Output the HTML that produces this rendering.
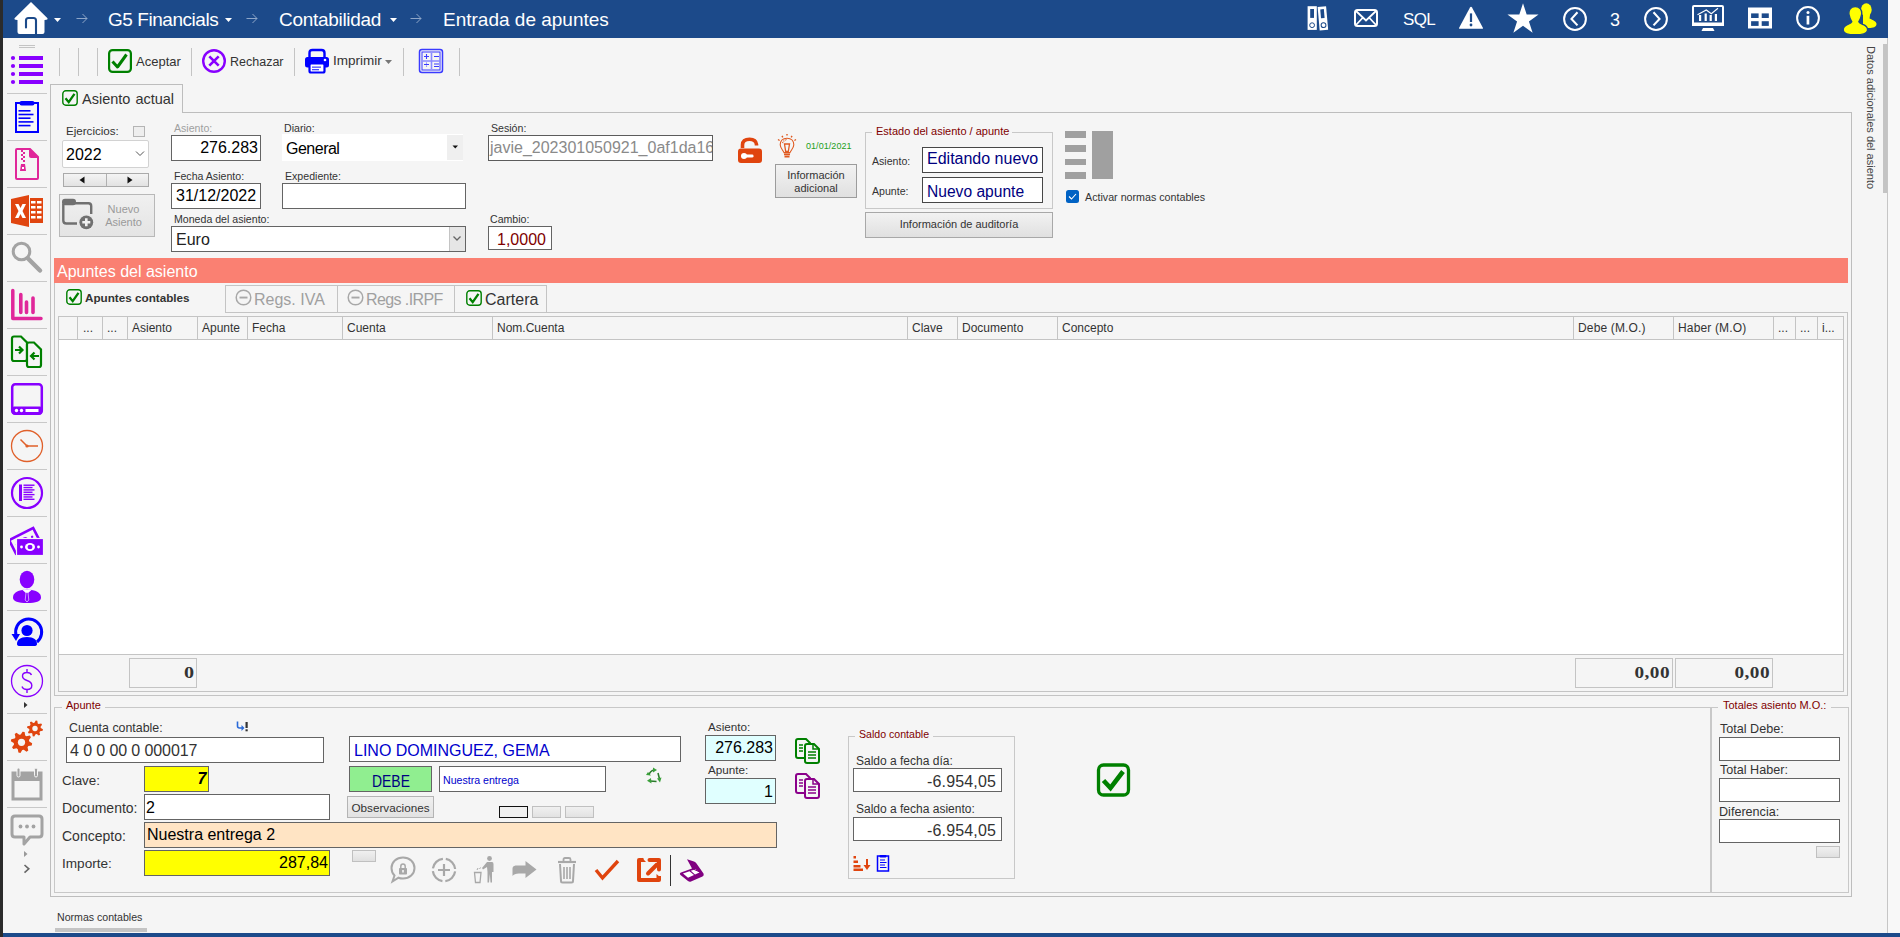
<!DOCTYPE html>
<html><head><meta charset="utf-8"><style>
html,body{margin:0;padding:0;}
body{width:1900px;height:937px;overflow:hidden;position:relative;background:#f5f5f5;font-family:"Liberation Sans",sans-serif;}
.a{position:absolute;display:block;}
.t{position:absolute;line-height:1;white-space:nowrap;}
</style></head><body>
<div class="a" style="left:0px;top:0px;width:3px;height:937px;background:#2b2b2b;"></div>
<div class="a" style="left:3px;top:0px;width:1885px;height:38px;background:#1c4a8a;"></div>
<div class="a" style="left:1888px;top:0px;width:12px;height:937px;background:#f8f8f8;"></div>
<div class="a" style="left:1887px;top:38px;width:1px;height:895px;background:#c6c6c6;"></div>
<div class="a" style="left:3px;top:933px;width:1897px;height:4px;background:#1c4a8a;"></div>
<div class="a" style="left:1883px;top:44px;width:4px;height:149px;background:#c4c4c4;"></div>
<div class="t" style="left:1876px;top:46px;font-size:11px;color:#444;transform-origin:0 0;transform:rotate(90deg);font-family:'Liberation Sans',sans-serif;line-height:1;">Datos adicionales del asiento</div>
<svg class="a" style="left:13px;top:0px;" width="36" height="36" viewBox="0 0 36 36"><path d="M18 2 L34.5 18.2 Q35 19.5 33.5 19.7 L31.5 20 L31.5 32 Q31.5 34 29.5 34 L6.5 34 Q4.5 34 4.5 32 L4.5 20 L2.5 19.7 Q1 19.5 1.5 18.2 Z" fill="#fff"/><path d="M13 27.5 L13 20.5 Q13 18 15.5 18 L20.5 18 Q23 18 23 20.5 L23 34" stroke="#1c4a8a" stroke-width="2.1" fill="none" stroke-linecap="round"/></svg>
<svg class="a" style="left:54px;top:18px;" width="7" height="4" viewBox="0 0 7 4"><path d="M0 0 L7 0 L3.5 4 Z" fill="#fff"/></svg>
<svg class="a" style="left:76px;top:13px;" width="12" height="11" viewBox="0 0 12 11"><path d="M0.5 5.5 L11 5.5 M6.5 1 L11 5.5 L6.5 10" stroke="#8ea6c8" stroke-width="1" fill="none"/></svg>
<div class="t" style="left:108px;top:9.92px;font-size:19px;color:#fff;font-weight:400;font-family:'Liberation Sans',sans-serif;letter-spacing:-0.45px">G5 Financials</div>
<svg class="a" style="left:225px;top:18px;" width="7" height="4" viewBox="0 0 7 4"><path d="M0 0 L7 0 L3.5 4 Z" fill="#fff"/></svg>
<svg class="a" style="left:246px;top:13px;" width="12" height="11" viewBox="0 0 12 11"><path d="M0.5 5.5 L11 5.5 M6.5 1 L11 5.5 L6.5 10" stroke="#8ea6c8" stroke-width="1" fill="none"/></svg>
<div class="t" style="left:279px;top:9.92px;font-size:19px;color:#fff;font-weight:400;font-family:'Liberation Sans',sans-serif;letter-spacing:-0.3px">Contabilidad</div>
<svg class="a" style="left:390px;top:18px;" width="7" height="4" viewBox="0 0 7 4"><path d="M0 0 L7 0 L3.5 4 Z" fill="#fff"/></svg>
<svg class="a" style="left:410px;top:13px;" width="12" height="11" viewBox="0 0 12 11"><path d="M0.5 5.5 L11 5.5 M6.5 1 L11 5.5 L6.5 10" stroke="#8ea6c8" stroke-width="1" fill="none"/></svg>
<div class="t" style="left:443px;top:9.92px;font-size:19px;color:#fff;font-weight:400;font-family:'Liberation Sans',sans-serif;">Entrada de apuntes</div>
<svg class="a" style="left:1306px;top:5px;" width="24" height="26" viewBox="0 0 24 26"><g fill="#fff"><rect x="1.6" y="1.2" width="9.2" height="23.7"/></g><rect x="4.2" y="4" width="3.8" height="8.9" fill="#1c4a8a"/><circle cx="6.1" cy="20.2" r="2.4" fill="none" stroke="#1c4a8a" stroke-width="1"/><g transform="rotate(-5 16 13)"><rect x="12.6" y="1.6" width="8.5" height="23.7" fill="#fff"/><rect x="15" y="4.3" width="3.6" height="8.9" fill="#1c4a8a"/><circle cx="16.9" cy="20.3" r="2.4" fill="none" stroke="#1c4a8a" stroke-width="1"/></g></svg>
<svg class="a" style="left:1353px;top:8px;" width="26" height="20" viewBox="0 0 26 20"><rect x="2" y="2" width="22" height="16" rx="2.5" fill="none" stroke="#fff" stroke-width="2"/><path d="M3 3 L13 12.5 L23 3 M3 17 L9.5 10 M23 17 L16.5 10" stroke="#fff" stroke-width="1.8" fill="none"/></svg>
<div class="t" style="left:1403px;top:11.11px;font-size:17px;color:#fff;font-weight:400;font-family:'Liberation Sans',sans-serif;letter-spacing:-0.6px">SQL</div>
<svg class="a" style="left:1457px;top:5px;" width="28" height="26" viewBox="0 0 28 26"><path d="M14 1.7 Q14.6 1.7 15 2.4 L26 23 Q26.3 23.8 25.4 23.8 L2.6 23.8 Q1.7 23.8 2 23 L13 2.4 Q13.4 1.7 14 1.7Z" fill="#fff"/><rect x="12.9" y="8.4" width="2.2" height="8.6" fill="#1c4a8a"/><circle cx="14" cy="20" r="1.4" fill="#1c4a8a"/></svg>
<svg class="a" style="left:1505px;top:2px;" width="36" height="34" viewBox="0 0 36 34"><polygon points="18.00,1.20 21.67,12.50 33.56,12.50 23.94,19.49 27.62,30.80 18.00,23.81 8.38,30.80 12.06,19.49 2.44,12.50 14.33,12.50" fill="#fff"/></svg>
<svg class="a" style="left:1561px;top:5px;" width="28" height="28" viewBox="0 0 28 28"><circle cx="14" cy="14" r="10.9" fill="none" stroke="#fff" stroke-width="2"/><path d="M16.5 7.3 L10.5 13.9 L16.5 20.4" stroke="#fff" stroke-width="2.1" fill="none"/></svg>
<div class="t" style="left:1610px;top:10.76px;font-size:18px;color:#fff;font-weight:400;font-family:'Liberation Sans',sans-serif;">3</div>
<svg class="a" style="left:1642px;top:5px;" width="28" height="28" viewBox="0 0 28 28"><circle cx="14" cy="14" r="10.9" fill="none" stroke="#fff" stroke-width="2"/><path d="M11.5 7.3 L17.5 13.9 L11.5 20.4" stroke="#fff" stroke-width="2.1" fill="none"/></svg>
<svg class="a" style="left:1690px;top:3px;" width="36" height="30" viewBox="0 0 36 30"><rect x="3" y="3" width="30" height="19" rx="1" fill="none" stroke="#fff" stroke-width="2"/><rect x="2" y="19.5" width="32" height="3.5" fill="#fff"/><path d="M13 25 L23 25 L24.5 28 L11.5 28Z" fill="#fff"/><g fill="#fff"><rect x="9" y="12" width="2.2" height="6"/><rect x="14.6" y="10.5" width="2.2" height="7.5"/><rect x="19.6" y="12" width="2.2" height="6"/><rect x="24.8" y="11" width="2.2" height="7"/></g><path d="M7.5 11.7 L16.3 7 L21.3 10.8 L28 5.3" stroke="#fff" stroke-width="1.1" fill="none"/></svg>
<svg class="a" style="left:1748px;top:7px;" width="24" height="22" viewBox="0 0 24 22"><rect x="0" y="0.5" width="24" height="21" fill="#fff"/><g fill="#1c4a8a"><rect x="3.1" y="6.4" width="7.5" height="4.6"/><rect x="13.7" y="6.4" width="7.1" height="4.6"/><rect x="3.1" y="14.2" width="7.5" height="4.7"/><rect x="13.7" y="14.2" width="7.1" height="4.7"/></g></svg>
<svg class="a" style="left:1794px;top:5px;" width="28" height="28" viewBox="0 0 28 28"><circle cx="14" cy="13" r="10.9" fill="none" stroke="#fff" stroke-width="2"/><circle cx="14" cy="7.6" r="1.5" fill="#fff"/><rect x="12.6" y="10.8" width="2.7" height="8.7" fill="#fff"/></svg>
<svg class="a" style="left:1843px;top:1px;" width="36" height="36" viewBox="0 0 36 36"><g fill="#ffff00"><ellipse cx="23.3" cy="8.8" rx="5.4" ry="6.5"/><path d="M20 14 L27 14 L26.5 17.5 C30 19 33.5 20.5 33.5 23 C33.5 26 30 27 26 27 L20 27Z"/></g><g fill="#ffff00" stroke="#1c4a8a" stroke-width="1.4"><path d="M12.2 5.5 C16.8 5.5 19.3 9 18.6 13.5 C18.2 16.5 16.8 19 15.8 20.8 C16.3 22 18 22.6 20.5 23.7 C24 25.3 24.8 27.5 24.5 29.5 C24 32.8 19 33.8 12.2 33.8 C5.4 33.8 0.6 32.8 0.3 29.5 C0 27.5 0.8 25.3 4.2 23.7 C6.7 22.6 8.3 22 8.8 20.8 C7.8 19 6.4 16.5 6 13.5 C5.3 9 7.8 5.5 12.2 5.5Z"/></g></svg>
<div class="a" style="left:19px;top:45px;width:16px;height:1px;background:#c4c4c4;"></div>
<div class="a" style="left:19px;top:47px;width:16px;height:1px;background:#c4c4c4;"></div>
<div class="a" style="left:7px;top:93px;width:40px;height:1px;background:#c8c8c8;"></div>
<div class="a" style="left:7px;top:140px;width:40px;height:1px;background:#c8c8c8;"></div>
<div class="a" style="left:7px;top:187px;width:40px;height:1px;background:#c8c8c8;"></div>
<div class="a" style="left:7px;top:234px;width:40px;height:1px;background:#c8c8c8;"></div>
<div class="a" style="left:7px;top:281px;width:40px;height:1px;background:#c8c8c8;"></div>
<div class="a" style="left:7px;top:328px;width:40px;height:1px;background:#c8c8c8;"></div>
<div class="a" style="left:7px;top:375px;width:40px;height:1px;background:#c8c8c8;"></div>
<div class="a" style="left:7px;top:422px;width:40px;height:1px;background:#c8c8c8;"></div>
<div class="a" style="left:7px;top:469px;width:40px;height:1px;background:#c8c8c8;"></div>
<div class="a" style="left:7px;top:516px;width:40px;height:1px;background:#c8c8c8;"></div>
<div class="a" style="left:7px;top:563px;width:40px;height:1px;background:#c8c8c8;"></div>
<div class="a" style="left:7px;top:610px;width:40px;height:1px;background:#c8c8c8;"></div>
<div class="a" style="left:7px;top:656px;width:40px;height:1px;background:#c8c8c8;"></div>
<div class="a" style="left:7px;top:713px;width:40px;height:1px;background:#c8c8c8;"></div>
<div class="a" style="left:7px;top:760px;width:40px;height:1px;background:#c8c8c8;"></div>
<div class="a" style="left:7px;top:807px;width:40px;height:1px;background:#c8c8c8;"></div>
<svg class="a" style="left:9px;top:54px;" width="36" height="32" viewBox="0 0 36 32"><circle cx="4" cy="4" r="2.1" fill="#8800ff"/><rect x="10" y="2" width="24" height="4" fill="#8800ff"/><circle cx="4" cy="12" r="2.1" fill="#8800ff"/><rect x="10" y="10" width="24" height="4" fill="#8800ff"/><circle cx="4" cy="20" r="2.1" fill="#8800ff"/><rect x="10" y="18" width="24" height="4" fill="#8800ff"/><circle cx="4" cy="28" r="2.1" fill="#8800ff"/><rect x="10" y="26" width="24" height="4" fill="#8800ff"/></svg>
<svg class="a" style="left:14px;top:100px;" width="26" height="34" viewBox="0 0 26 34"><rect x="2" y="3" width="22" height="29" fill="none" stroke="#0000ff" stroke-width="2"/><rect x="5.5" y="1" width="15" height="4.5" rx="2" fill="#0000ff"/><rect x="4.5" y="10.0" width="12" height="1.6" fill="#0000ff"/><rect x="4.5" y="13.7" width="15" height="1.6" fill="#0000ff"/><rect x="4.5" y="17.4" width="12" height="1.6" fill="#0000ff"/><rect x="4.5" y="21.1" width="15" height="1.6" fill="#0000ff"/><rect x="4.5" y="24.8" width="12" height="1.6" fill="#0000ff"/></svg>
<svg class="a" style="left:13px;top:147px;" width="28" height="34" viewBox="0 0 28 34"><path d="M4 2 L17 2 L25 10 L25 31 Q25 32 24 32 L4 32 Q3 32 3 31 L3 3 Q3 2 4 2Z" fill="none" stroke="#e0279a" stroke-width="2"/><path d="M16 1 L26 11 L18 11 Q16 11 16 9Z" fill="#e0279a"/><g fill="#e0279a"><rect x="8" y="3" width="2" height="2"/><rect x="10" y="5" width="2" height="2"/><rect x="8" y="7" width="2" height="2"/><rect x="10" y="9" width="2" height="2"/><rect x="8" y="11" width="2" height="2"/><rect x="10" y="13" width="2" height="2"/><path d="M8 17 L12 17 L13 24 L7 24Z"/></g><rect x="9" y="20" width="2" height="2" fill="#fff"/></svg>
<svg class="a" style="left:10px;top:194px;" width="34" height="34" viewBox="0 0 34 34"><path d="M1 5 L19 1 L19 33 L1 29Z" fill="#e0450f"/><rect x="20" y="4" width="13" height="25" fill="#e0450f"/><g fill="#fff"><rect x="21" y="7" width="4.5" height="2.5"/><rect x="27" y="7" width="4.5" height="2.5"/><rect x="21" y="12" width="4.5" height="2.5"/><rect x="27" y="12" width="4.5" height="2.5"/><rect x="21" y="17" width="4.5" height="2.5"/><rect x="27" y="17" width="4.5" height="2.5"/><rect x="21" y="22" width="4.5" height="2.5"/><rect x="27" y="22" width="4.5" height="2.5"/></g><path d="M5 10 L8.5 10 L10.5 14 L12.5 10 L16 10 L12.5 17 L16 24 L12.5 24 L10.5 20 L8.5 24 L5 24 L8.5 17Z" fill="#fff"/></svg>
<svg class="a" style="left:10px;top:241px;" width="34" height="34" viewBox="0 0 34 34"><circle cx="11.5" cy="10.5" r="8.3" fill="none" stroke="#a3a3a3" stroke-width="3"/><path d="M18 17.5 L30 29.5" stroke="#a3a3a3" stroke-width="4.5" stroke-linecap="round"/></svg>
<svg class="a" style="left:10px;top:288px;" width="34" height="34" viewBox="0 0 34 34"><path d="M2.8 2.5 L2.8 30.5 L31 30.5" stroke="#e0279a" stroke-width="3.5" fill="none" stroke-linecap="round" stroke-linejoin="round"/><path d="M10.8 6.5 L10.8 24.5 M16.5 14 L16.5 24.5 M23 10 L23 24.5" stroke="#e0279a" stroke-width="3.6" stroke-linecap="round"/></svg>
<svg class="a" style="left:10px;top:335px;" width="34" height="34" viewBox="0 0 34 34"><path d="M4 1.5 L11 1.5 L17 7.5 L17 24 Q17 26 15 26 L4 26 Q2 26 2 24 L2 3.5 Q2 1.5 4 1.5Z" fill="none" stroke="#008000" stroke-width="2.2"/><path d="M19 7.5 L24 7.5 L31 14.5 L31 30 Q31 32 29 32 L19 32 Q17 32 17 30 L17 9.5 Q17 7.5 19 7.5Z" fill="#f5f5f5" stroke="#008000" stroke-width="2.2"/><path d="M5 15 L12 15 M9 11.5 L12.5 15 L9 18.5" stroke="#008000" stroke-width="2.2" fill="none"/><path d="M29 21 L21 21 M24.5 17.5 L21 21 L24.5 24.5" stroke="#008000" stroke-width="2.2" fill="none"/></svg>
<svg class="a" style="left:10px;top:382px;" width="34" height="34" viewBox="0 0 34 34"><rect x="2.2" y="2.2" width="29.6" height="29.6" rx="3" fill="none" stroke="#8800ff" stroke-width="2.5"/><rect x="2" y="24.5" width="30" height="8" rx="2" fill="#8800ff"/><circle cx="6.5" cy="28.5" r="1.7" fill="#fff"/><circle cx="11.5" cy="28.5" r="1.7" fill="#fff"/><rect x="15.5" y="27" width="13" height="3" fill="#fff"/></svg>
<svg class="a" style="left:10px;top:429px;" width="34" height="34" viewBox="0 0 34 34"><circle cx="17" cy="17" r="15.5" fill="none" stroke="#e0602a" stroke-width="1.3"/><path d="M10.5 10.5 L17 17 L28 17" stroke="#e0602a" stroke-width="1.5" fill="none"/><circle cx="17" cy="17" r="1.6" fill="#e0602a"/></svg>
<svg class="a" style="left:10px;top:476px;" width="34" height="34" viewBox="0 0 34 34"><circle cx="17" cy="17" r="15" fill="none" stroke="#8800ff" stroke-width="2.2"/><rect x="9" y="8.5" width="3" height="16.5" fill="#8800ff"/><rect x="13.5" y="8.50" width="11" height="1.4" fill="#8800ff"/><rect x="13.5" y="10.85" width="9" height="1.4" fill="#8800ff"/><rect x="13.5" y="13.20" width="11" height="1.4" fill="#8800ff"/><rect x="13.5" y="15.55" width="9" height="1.4" fill="#8800ff"/><rect x="13.5" y="17.90" width="11" height="1.4" fill="#8800ff"/><rect x="13.5" y="20.25" width="9" height="1.4" fill="#8800ff"/><rect x="13.5" y="22.60" width="11" height="1.4" fill="#8800ff"/></svg>
<svg class="a" style="left:10px;top:523px;" width="34" height="34" viewBox="0 0 34 34"><g transform="rotate(-27 17 17)"><rect x="1" y="9" width="27" height="15" fill="none" stroke="#8800ff" stroke-width="2.6"/><ellipse cx="14.5" cy="16.5" rx="4" ry="3.3" fill="#8800ff"/><circle cx="6" cy="16.5" r="1.2" fill="#8800ff"/><circle cx="23" cy="16.5" r="1.2" fill="#8800ff"/></g><rect x="6.5" y="15.5" width="27" height="17" fill="#8800ff" stroke="#f5f5f5" stroke-width="1.2"/><ellipse cx="20" cy="24" rx="5" ry="4" fill="#fff"/><circle cx="11.5" cy="24" r="1.4" fill="#fff"/><circle cx="28.5" cy="24" r="1.4" fill="#fff"/><ellipse cx="20" cy="24" rx="2.5" ry="2.3" fill="#8800ff"/></svg>
<svg class="a" style="left:10px;top:569px;" width="34" height="36" viewBox="0 0 34 36"><ellipse cx="17" cy="10.5" rx="7.3" ry="8.8" fill="#8800ff"/><path d="M17 20 L10 21.5 C5 23 3 25.5 3 28.5 C3 32.5 8 34 17 34 C26 34 31 32.5 31 28.5 C31 25.5 29 23 24 21.5Z" fill="#8800ff"/><path d="M12.5 21 L17 25 L21.5 21 L20 20.3 L14 20.3Z" fill="#fff"/><path d="M16 23.5 L18 23.5 L18.8 31 L17 33 L15.2 31Z" fill="#8800ff" stroke="#fff" stroke-width="0.6"/></svg>
<svg class="a" style="left:10px;top:615px;" width="34" height="36" viewBox="0 0 34 36"><path d="M6 20 A13 13 0 1 1 27 27" stroke="#0000ff" stroke-width="3" fill="none"/><path d="M1.5 19 L10 19 L6 26Z" fill="#0000ff"/><circle cx="17" cy="15.5" r="5.6" fill="#0000ff"/><path d="M17 22 C10 22 7 25 7 29 Q7 31 10 31 L24 31 Q27 31 27 29 C27 25 24 22 17 22Z" fill="#0000ff"/></svg>
<svg class="a" style="left:10px;top:664px;" width="34" height="34" viewBox="0 0 34 34"><circle cx="17" cy="17" r="15.5" fill="none" stroke="#8800ff" stroke-width="1.3"/><path d="M21.5 11 Q20.5 8.5 17 8.5 Q12.5 8.5 12.5 12 Q12.5 15 17 16.5 Q21.8 18 21.8 21.5 Q21.8 25.5 17 25.5 Q13 25.5 12 22.5 M17 5 L17 8.5 M17 25.5 L17 29" stroke="#8800ff" stroke-width="1.4" fill="none"/></svg>
<svg class="a" style="left:24px;top:702px;" width="4" height="6" viewBox="0 0 4 6"><path d="M0 0 L3.5 3 L0 6Z" fill="#333"/></svg>
<svg class="a" style="left:9px;top:719px;" width="36" height="36" viewBox="0 0 36 36"><polygon points="23.15,24.35 22.74,26.41 19.38,26.98 18.53,28.25 19.29,31.57 17.54,32.74 14.76,30.76 13.26,31.06 11.45,33.95 9.39,33.54 8.82,30.18 7.55,29.33 4.23,30.09 3.06,28.34 5.04,25.56 4.74,24.06 1.85,22.25 2.26,20.19 5.62,19.62 6.47,18.35 5.71,15.03 7.46,13.86 10.24,15.84 11.74,15.54 13.55,12.65 15.61,13.06 16.18,16.42 17.45,17.27 20.77,16.51 21.94,18.26 19.96,21.04 20.26,22.54" fill="#e0450f"/><circle cx="12.5" cy="23.3" r="3.6" fill="#f5f5f5"/><polygon points="33.96,10.28 33.66,11.82 31.12,12.23 30.48,13.18 31.08,15.68 29.77,16.56 27.68,15.05 26.57,15.27 25.22,17.46 23.68,17.16 23.27,14.62 22.32,13.98 19.82,14.58 18.94,13.27 20.45,11.18 20.23,10.07 18.04,8.72 18.34,7.18 20.88,6.77 21.52,5.82 20.92,3.32 22.23,2.44 24.32,3.95 25.43,3.73 26.78,1.54 28.32,1.84 28.73,4.38 29.68,5.02 32.18,4.42 33.06,5.73 31.55,7.82 31.77,8.93" fill="#e0450f"/><circle cx="26" cy="9.5" r="2.7" fill="#f5f5f5"/></svg>
<svg class="a" style="left:10px;top:767px;" width="34" height="34" viewBox="0 0 34 34"><rect x="3" y="6" width="28" height="26" fill="none" stroke="#a3a3a3" stroke-width="3"/><rect x="3" y="6" width="28" height="8" fill="#a3a3a3"/><rect x="7" y="1" width="3" height="9" rx="1.5" fill="#a3a3a3" stroke="#f5f5f5" stroke-width="1"/><rect x="24.5" y="1" width="3" height="9" rx="1.5" fill="#a3a3a3" stroke="#f5f5f5" stroke-width="1"/></svg>
<svg class="a" style="left:10px;top:814px;" width="34" height="34" viewBox="0 0 34 34"><path d="M5 2 L29 2 Q32 2 32 5 L32 20 Q32 23 29 23 L20 23 L14 30 L14 23 L5 23 Q2 23 2 20 L2 5 Q2 2 5 2Z" fill="none" stroke="#a3a3a3" stroke-width="3" stroke-linejoin="round"/><circle cx="10.5" cy="12.5" r="1.9" fill="#a3a3a3"/><circle cx="17" cy="12.5" r="1.9" fill="#a3a3a3"/><circle cx="23.5" cy="12.5" r="1.9" fill="#a3a3a3"/></svg>
<svg class="a" style="left:24px;top:851px;" width="4" height="6" viewBox="0 0 4 6"><path d="M0 0 L3.5 3 L0 6Z" fill="#999"/></svg>
<svg class="a" style="left:23px;top:864px;" width="8" height="10" viewBox="0 0 8 10"><path d="M1.5 1 L5.8 4.8 L1.5 8.6" stroke="#666" stroke-width="1.6" fill="none"/></svg>
<div class="a" style="left:59px;top:48px;width:1px;height:28px;background:#c4c4c4;"></div>
<div class="a" style="left:78px;top:48px;width:1px;height:28px;background:#c4c4c4;"></div>
<div class="a" style="left:97px;top:48px;width:1px;height:28px;background:#c4c4c4;"></div>
<div class="a" style="left:191px;top:48px;width:1px;height:28px;background:#c4c4c4;"></div>
<div class="a" style="left:294px;top:48px;width:1px;height:28px;background:#c4c4c4;"></div>
<div class="a" style="left:403px;top:48px;width:1px;height:28px;background:#c4c4c4;"></div>
<div class="a" style="left:459px;top:48px;width:1px;height:28px;background:#c4c4c4;"></div>
<svg class="a" style="left:107px;top:48px;" width="26" height="26" viewBox="0 0 26 26"><rect x="2.1" y="2.1" width="21.8" height="21.8" rx="3.5" fill="none" stroke="#008000" stroke-width="2.2"/><path d="M5.5 13.5 L10.5 19 L19.5 6.5" stroke="#008000" stroke-width="3" fill="none" stroke-linejoin="round"/></svg>
<div class="t" style="left:136px;top:54.80px;font-size:13px;color:#333;font-weight:400;font-family:'Liberation Sans',sans-serif;">Aceptar</div>
<svg class="a" style="left:201px;top:48px;" width="26" height="26" viewBox="0 0 26 26"><circle cx="13" cy="13" r="10.8" fill="none" stroke="#8800ff" stroke-width="2.4"/><path d="M8.3 8.3 L17.7 17.7 M17.7 8.3 L8.3 17.7" stroke="#8800ff" stroke-width="2.6"/></svg>
<div class="t" style="left:230px;top:55.72px;font-size:12.5px;color:#333;font-weight:400;font-family:'Liberation Sans',sans-serif;">Rechazar</div>
<svg class="a" style="left:304px;top:48px;" width="26" height="26" viewBox="0 0 26 26"><path d="M5.5 10 L5.5 5 Q5.5 2 8.5 2 L17.5 2 Q20.5 2 20.5 5 L20.5 10" fill="none" stroke="#0000ff" stroke-width="2.4"/><rect x="1" y="9" width="24" height="10.5" rx="2.5" fill="#0000ff"/><circle cx="21" cy="12" r="1.3" fill="#fff"/><rect x="5.5" y="15.5" width="15" height="9" rx="1.5" fill="#fff" stroke="#0000ff" stroke-width="2.2"/><rect x="8" y="18.5" width="9" height="1.3" fill="#4a4aff"/><rect x="8" y="21" width="7" height="1.3" fill="#4a4aff"/></svg>
<div class="t" style="left:333px;top:54.17px;font-size:13.5px;color:#333;font-weight:400;font-family:'Liberation Sans',sans-serif;">Imprimir</div>
<svg class="a" style="left:385px;top:60px;" width="7" height="4" viewBox="0 0 7 4"><path d="M0 0 L7 0 L3.5 4 Z" fill="#777"/></svg>
<svg class="a" style="left:418px;top:48px;" width="26" height="26" viewBox="0 0 26 26"><rect x="1.5" y="1.5" width="23" height="23" rx="2.5" fill="none" stroke="#3a3aff" stroke-width="1.5"/><rect x="4" y="4" width="18" height="18" fill="none" stroke="#3a3aff" stroke-width="1"/><g stroke="#8a8aff" stroke-width="1.6"><path d="M13.5 5 L13.5 21 M5 13 L22 13"/></g><g stroke="#3a3aff" stroke-width="1.1"><path d="M6 8.5 L11 8.5 M8.5 6 L8.5 11 M16 8.5 L21 8.5 M6 16.5 L11 16.5 M16 16 L21 16 M16 18.5 L21 18.5"/></g><circle cx="8.5" cy="15" r="0.6" fill="#3a3aff"/><circle cx="8.5" cy="18" r="0.6" fill="#3a3aff"/></svg>
<div class="a" style="left:50px;top:84px;width:133px;height:1px;background:#bdbdbd;"></div>
<div class="a" style="left:50px;top:84px;width:1px;height:813px;background:#bdbdbd;"></div>
<div class="a" style="left:182px;top:84px;width:1px;height:29px;background:#bdbdbd;"></div>
<div class="a" style="left:182px;top:112px;width:1670px;height:1px;background:#bdbdbd;"></div>
<div class="a" style="left:1851px;top:112px;width:1px;height:785px;background:#bdbdbd;"></div>
<div class="a" style="left:50px;top:896px;width:1802px;height:1px;background:#bdbdbd;"></div>
<svg class="a" style="left:62px;top:90px;" width="16" height="16" viewBox="0 0 16 16"><rect x="0.8" y="0.8" width="14.4" height="14.4" rx="3" fill="none" stroke="#008000" stroke-width="1.4"/><path d="M3.52 8.32 L6.72 12.16 L12.48 3.84" stroke="#008000" stroke-width="2.3" fill="none"/></svg>
<div class="t" style="left:82px;top:91.73px;font-size:14.5px;color:#333;font-weight:400;font-family:'Liberation Sans',sans-serif;word-spacing:1px">Asiento actual</div>
<div class="t" style="left:66px;top:125.38px;font-size:11.6px;color:#333;font-weight:400;font-family:'Liberation Sans',sans-serif;">Ejercicios:</div>
<div class="a" style="left:133px;top:126px;width:12px;height:11px;background:#eeeeee;border:1px solid #b4b4b4;box-sizing:border-box;"></div>
<div class="a" style="left:62px;top:140px;width:87px;height:28px;background:#fff;border:1px solid #d2d2d2;box-sizing:border-box;border-radius:2px;"></div>
<div class="t" style="left:66px;top:146.96px;font-size:16px;color:#000;font-weight:400;font-family:'Liberation Sans',sans-serif;">2022</div>
<svg class="a" style="left:135px;top:150px;" width="10" height="7" viewBox="0 0 10 7"><path d="M1 1.5 L5 5.5 L9 1.5" stroke="#555" stroke-width="1" fill="none"/></svg>
<div class="a" style="left:63px;top:173px;width:86px;height:14px;background:linear-gradient(#f4f4f4,#e2e2e2);border:1px solid #aaaaaa;box-sizing:border-box;"></div>
<div class="a" style="left:106px;top:174px;width:1px;height:12px;background:#b0b0b0;"></div>
<svg class="a" style="left:79px;top:176px;" width="6" height="8" viewBox="0 0 6 8"><path d="M5.5 0.5 L5.5 7.5 L0.5 4Z" fill="#111"/></svg>
<svg class="a" style="left:127px;top:176px;" width="6" height="8" viewBox="0 0 6 8"><path d="M0.5 0.5 L0.5 7.5 L5.5 4Z" fill="#111"/></svg>
<div class="a" style="left:59px;top:194px;width:96px;height:43px;background:linear-gradient(#f0f0f0,#e4e4e4);border:1px solid #b8b8b8;box-sizing:border-box;"></div>
<svg class="a" style="left:61px;top:198px;" width="34" height="34" viewBox="0 0 34 34"><rect x="1" y="0.8" width="14" height="6.5" rx="3" fill="#707070"/><path d="M2.3 5.5 L2.3 22.5 Q2.3 25.5 5.3 25.5 L16 25.5" fill="none" stroke="#707070" stroke-width="2.4"/><path d="M2.3 5.3 L27.5 5.3 Q30.2 5.3 30.2 8 L30.2 16" fill="none" stroke="#707070" stroke-width="2.4"/><circle cx="25.3" cy="24.3" r="8.2" fill="#e8e8e8"/><circle cx="25.3" cy="24.3" r="6.9" fill="#707070"/><path d="M25.3 20.3 L25.3 28.3 M21.3 24.3 L29.3 24.3" stroke="#f0f0f0" stroke-width="2.6"/></svg>
<div class="t" style="left:-176.5px;width:600px;text-align:center;top:204.09px;font-size:11px;color:#9a9a9a;font-weight:400;font-family:'Liberation Sans',sans-serif;">Nuevo</div>
<div class="t" style="left:-176.5px;width:600px;text-align:center;top:216.89px;font-size:11px;color:#9a9a9a;font-weight:400;font-family:'Liberation Sans',sans-serif;">Asiento</div>
<div class="t" style="left:174px;top:123.03px;font-size:10.6px;color:#a0a0a0;font-weight:400;font-family:'Liberation Sans',sans-serif;">Asiento:</div>
<div class="a" style="left:171px;top:135px;width:90px;height:26px;background:#fff;border:1px solid #646464;box-sizing:border-box;"></div>
<div class="t" style="left:-342px;width:600px;text-align:right;top:140.26px;font-size:16px;color:#000;font-weight:400;font-family:'Liberation Sans',sans-serif;">276.283</div>
<div class="t" style="left:174px;top:170.73px;font-size:10.6px;color:#333;font-weight:400;font-family:'Liberation Sans',sans-serif;">Fecha Asiento:</div>
<div class="a" style="left:171px;top:183px;width:90px;height:26px;background:#fff;border:1px solid #646464;box-sizing:border-box;"></div>
<div class="t" style="left:176px;top:188.26px;font-size:16px;color:#000;font-weight:400;font-family:'Liberation Sans',sans-serif;">31/12/2022</div>
<div class="t" style="left:174px;top:214.03px;font-size:10.6px;color:#333;font-weight:400;font-family:'Liberation Sans',sans-serif;">Moneda del asiento:</div>
<div class="a" style="left:171px;top:226px;width:295px;height:26px;background:#fff;border:1px solid #646464;box-sizing:border-box;"></div>
<div class="a" style="left:449px;top:227px;width:16px;height:24px;background:#e6e6e6;border-left:1px solid #c4c4c4;box-sizing:border-box;"></div>
<svg class="a" style="left:452px;top:235px;" width="10" height="7" viewBox="0 0 10 7"><path d="M1.5 1.5 L5 5 L8.5 1.5" stroke="#666" stroke-width="1.3" fill="none"/></svg>
<div class="t" style="left:176px;top:232.26px;font-size:16px;color:#222;font-weight:400;font-family:'Liberation Sans',sans-serif;">Euro</div>
<div class="t" style="left:284px;top:122.73px;font-size:10.6px;color:#333;font-weight:400;font-family:'Liberation Sans',sans-serif;">Diario:</div>
<div class="a" style="left:282px;top:134px;width:181px;height:27px;background:#fff;"></div>
<div class="a" style="left:447px;top:135px;width:16px;height:25px;background:#efefef;"></div>
<svg class="a" style="left:452px;top:145px;" width="7" height="4" viewBox="0 0 7 4"><path d="M0.5 0.5 L6 0.5 L3.25 3.5Z" fill="#111"/></svg>
<div class="t" style="left:286px;top:141.16px;font-size:16px;color:#000;font-weight:400;font-family:'Liberation Sans',sans-serif;letter-spacing:-0.5px">General</div>
<div class="t" style="left:285px;top:170.73px;font-size:10.6px;color:#333;font-weight:400;font-family:'Liberation Sans',sans-serif;">Expediente:</div>
<div class="a" style="left:282px;top:183px;width:184px;height:26px;background:#fff;border:1px solid #646464;box-sizing:border-box;"></div>
<div class="t" style="left:491px;top:122.73px;font-size:10.6px;color:#333;font-weight:400;font-family:'Liberation Sans',sans-serif;">Sesión:</div>
<div class="a" style="left:488px;top:135px;width:225px;height:26px;background:#fff;border:1px solid #5c5c5c;box-sizing:border-box;overflow:hidden;"><div class="t" style="left:1px;top:3.96px;font-size:16px;color:#8a8a8a;">javie_202301050921_0af1da16</div></div>
<div class="t" style="left:490px;top:213.63px;font-size:10.6px;color:#333;font-weight:400;font-family:'Liberation Sans',sans-serif;">Cambio:</div>
<div class="a" style="left:488px;top:226px;width:64px;height:24px;background:#fff;border:1px solid #646464;box-sizing:border-box;"></div>
<div class="t" style="left:497px;top:231.66px;font-size:16px;color:#800000;font-weight:400;font-family:'Liberation Sans',sans-serif;">1,0000</div>
<svg class="a" style="left:737px;top:137px;" width="26" height="27" viewBox="0 0 26 27"><path d="M5.5 11 L5.5 8 Q5.5 2.2 12.5 2.2 Q19 2.2 19.5 7.5 L19.5 8.5" stroke="#e0440e" stroke-width="3.6" fill="none"/><rect x="1" y="11.5" width="24" height="14.5" rx="3" fill="#e0440e"/><circle cx="7" cy="19" r="3" fill="#fff"/><rect x="7" y="17.4" width="9.5" height="3.2" rx="1.4" fill="#fff"/></svg>
<svg class="a" style="left:776px;top:133px;" width="22" height="26" viewBox="0 0 22 26"><g stroke="#e05a20" fill="none" stroke-width="1.1"><path d="M11 5.2 C6.5 5.2 4.2 8.3 4.2 11.8 C4.2 15 6.8 17 8 19.6 L14 19.6 C15.2 17 17.8 15 17.8 11.8 C17.8 8.3 15.5 5.2 11 5.2Z"/><path d="M8.5 11 L13.5 11 L12.3 18.5 L9.7 18.5Z" stroke-width="1.3"/><path d="M8 21.4 L14 21.4 M8.5 23.6 L13.5 23.6" stroke-width="1.6"/><path d="M11 1 L11 2.6 M6 2.8 L6.8 4.3 M16 2.8 L15.2 4.3 M2 6.5 L3.6 7.5 M20 6.5 L18.4 7.5" stroke-width="1.4"/><path d="M6.5 10 Q8 7 11 6.5" stroke-dasharray="1 0.8"/></g></svg>
<div class="t" style="left:806px;top:142.38px;font-size:9px;color:#22a022;font-weight:400;font-family:'Liberation Sans',sans-serif;letter-spacing:0.05px">01/01/2021</div>
<div class="a" style="left:775px;top:164px;width:82px;height:34px;background:linear-gradient(#f2f2f2,#e0e0e0);border:1px solid #9c9c9c;box-sizing:border-box;"></div>
<div class="t" style="left:516px;width:600px;text-align:center;top:169.99px;font-size:11px;color:#333;font-weight:400;font-family:'Liberation Sans',sans-serif;">Información</div>
<div class="t" style="left:516px;width:600px;text-align:center;top:182.99px;font-size:11px;color:#333;font-weight:400;font-family:'Liberation Sans',sans-serif;">adicional</div>
<div class="a" style="left:865px;top:132px;width:188px;height:77px;background:transparent;border:1px solid #c8c8c8;box-sizing:border-box;"></div>
<div class="a" style="left:872px;top:127px;width:140px;height:11px;background:#f5f5f5;"></div>
<div class="t" style="left:876px;top:125.69px;font-size:11px;color:#800000;font-weight:400;font-family:'Liberation Sans',sans-serif;">Estado del asiento / apunte</div>
<div class="t" style="left:872px;top:156.43px;font-size:10.6px;color:#333;font-weight:400;font-family:'Liberation Sans',sans-serif;">Asiento:</div>
<div class="t" style="left:872px;top:185.63px;font-size:10.6px;color:#333;font-weight:400;font-family:'Liberation Sans',sans-serif;">Apunte:</div>
<div class="a" style="left:922px;top:147px;width:121px;height:26px;background:#fff;border:1px solid #474747;box-sizing:border-box;"></div>
<div class="t" style="left:927px;top:150.86px;font-size:16px;color:#000080;font-weight:400;font-family:'Liberation Sans',sans-serif;">Editando nuevo</div>
<div class="a" style="left:922px;top:177px;width:121px;height:26px;background:#fff;border:1px solid #474747;box-sizing:border-box;"></div>
<div class="t" style="left:927px;top:184.09px;font-size:15.6px;color:#000080;font-weight:400;font-family:'Liberation Sans',sans-serif;">Nuevo apunte</div>
<div class="a" style="left:865px;top:212px;width:188px;height:26px;background:linear-gradient(#f2f2f2,#e0e0e0);border:1px solid #a8a8a8;box-sizing:border-box;"></div>
<div class="t" style="left:659px;width:600px;text-align:center;top:219.09px;font-size:11px;color:#333;font-weight:400;font-family:'Liberation Sans',sans-serif;">Información de auditoría</div>
<div class="a" style="left:1065px;top:131px;width:21px;height:6.699999999999989px;background:#a0a0a0;"></div>
<div class="a" style="left:1065px;top:145px;width:21px;height:6.699999999999989px;background:#a0a0a0;"></div>
<div class="a" style="left:1065px;top:158.5px;width:21px;height:6.699999999999989px;background:#a0a0a0;"></div>
<div class="a" style="left:1065px;top:172px;width:21px;height:6.699999999999989px;background:#a0a0a0;"></div>
<div class="a" style="left:1092px;top:131px;width:21px;height:48px;background:#a0a0a0;"></div>
<svg class="a" style="left:1065px;top:189px;" width="15" height="15" viewBox="0 0 15 15"><rect x="1" y="1" width="13" height="13" rx="2.5" fill="#0062c4"/><path d="M4 7.5 L6.5 10 L11 5" stroke="#fff" stroke-width="1.1" fill="none"/></svg>
<div class="t" style="left:1085px;top:192.04px;font-size:10.7px;color:#333;font-weight:400;font-family:'Liberation Sans',sans-serif;">Activar normas contables</div>
<div class="a" style="left:54px;top:258px;width:1794px;height:25px;background:#fa8072;"></div>
<div class="t" style="left:57px;top:264.46px;font-size:16px;color:#fff;font-weight:400;font-family:'Liberation Sans',sans-serif;">Apuntes del asiento</div>
<div class="a" style="left:54px;top:283px;width:1px;height:413px;background:#c4c4c4;"></div>
<div class="a" style="left:225px;top:312px;width:1623px;height:1px;background:#c4c4c4;"></div>
<div class="a" style="left:1847px;top:312px;width:1px;height:384px;background:#c4c4c4;"></div>
<div class="a" style="left:54px;top:695px;width:1794px;height:1px;background:#c4c4c4;"></div>
<div class="a" style="left:225px;top:285px;width:113px;height:28px;background:#f5f5f5;border:1px solid #c4c4c4;box-sizing:border-box;"></div>
<div class="a" style="left:337px;top:285px;width:118px;height:28px;background:#f5f5f5;border:1px solid #c4c4c4;box-sizing:border-box;"></div>
<div class="a" style="left:454px;top:285px;width:93px;height:28px;background:#f5f5f5;border:1px solid #c4c4c4;box-sizing:border-box;"></div>
<svg class="a" style="left:66px;top:289px;" width="16" height="16" viewBox="0 0 16 16"><rect x="0.8" y="0.8" width="14.4" height="14.4" rx="3" fill="none" stroke="#008000" stroke-width="1.4"/><path d="M3.52 8.32 L6.72 12.16 L12.48 3.84" stroke="#008000" stroke-width="2.3" fill="none"/></svg>
<div class="t" style="left:85px;top:291.60px;font-size:11.7px;color:#333;font-weight:700;font-family:'Liberation Sans',sans-serif;">Apuntes contables</div>
<svg class="a" style="left:235px;top:289px;" width="17" height="17" viewBox="0 0 17 17"><circle cx="8.5" cy="8.5" r="7.3" fill="none" stroke="#a8a8a8" stroke-width="1.5"/><rect x="4.5" y="7.6" width="8" height="1.9" fill="#a8a8a8"/></svg>
<div class="t" style="left:254px;top:292.26px;font-size:16px;color:#a0a0a0;font-weight:400;font-family:'Liberation Sans',sans-serif;">Regs. IVA</div>
<svg class="a" style="left:347px;top:289px;" width="17" height="17" viewBox="0 0 17 17"><circle cx="8.5" cy="8.5" r="7.3" fill="none" stroke="#a8a8a8" stroke-width="1.5"/><rect x="4.5" y="7.6" width="8" height="1.9" fill="#a8a8a8"/></svg>
<div class="t" style="left:366px;top:292.26px;font-size:16px;color:#a0a0a0;font-weight:400;font-family:'Liberation Sans',sans-serif;letter-spacing:-0.6px">Regs .IRPF</div>
<svg class="a" style="left:466px;top:290px;" width="16" height="16" viewBox="0 0 16 16"><rect x="0.8" y="0.8" width="14.4" height="14.4" rx="3" fill="none" stroke="#008000" stroke-width="1.4"/><path d="M3.52 8.32 L6.72 12.16 L12.48 3.84" stroke="#008000" stroke-width="2.3" fill="none"/></svg>
<div class="t" style="left:485px;top:292.26px;font-size:16px;color:#333;font-weight:400;font-family:'Liberation Sans',sans-serif;">Cartera</div>
<div class="a" style="left:58px;top:316px;width:1786px;height:376px;background:#f5f5f5;border:1px solid #c4c4c4;box-sizing:border-box;"></div>
<div class="a" style="left:59px;top:340px;width:1784px;height:314px;background:#fff;"></div>
<div class="a" style="left:59px;top:339px;width:1784px;height:1px;background:#c4c4c4;"></div>
<div class="a" style="left:59px;top:654px;width:1784px;height:1px;background:#c4c4c4;"></div>
<div class="a" style="left:77px;top:317px;width:1px;height:22px;background:#c4c4c4;"></div>
<div class="a" style="left:102px;top:317px;width:1px;height:22px;background:#c4c4c4;"></div>
<div class="a" style="left:127px;top:317px;width:1px;height:22px;background:#c4c4c4;"></div>
<div class="a" style="left:197px;top:317px;width:1px;height:22px;background:#c4c4c4;"></div>
<div class="a" style="left:247px;top:317px;width:1px;height:22px;background:#c4c4c4;"></div>
<div class="a" style="left:342px;top:317px;width:1px;height:22px;background:#c4c4c4;"></div>
<div class="a" style="left:492px;top:317px;width:1px;height:22px;background:#c4c4c4;"></div>
<div class="a" style="left:907px;top:317px;width:1px;height:22px;background:#c4c4c4;"></div>
<div class="a" style="left:957px;top:317px;width:1px;height:22px;background:#c4c4c4;"></div>
<div class="a" style="left:1057px;top:317px;width:1px;height:22px;background:#c4c4c4;"></div>
<div class="a" style="left:1573px;top:317px;width:1px;height:22px;background:#c4c4c4;"></div>
<div class="a" style="left:1673px;top:317px;width:1px;height:22px;background:#c4c4c4;"></div>
<div class="a" style="left:1773px;top:317px;width:1px;height:22px;background:#c4c4c4;"></div>
<div class="a" style="left:1795px;top:317px;width:1px;height:22px;background:#c4c4c4;"></div>
<div class="a" style="left:1817px;top:317px;width:1px;height:22px;background:#c4c4c4;"></div>
<div class="t" style="left:83px;top:321.64px;font-size:12px;color:#333;font-weight:400;font-family:'Liberation Sans',sans-serif;">...</div>
<div class="t" style="left:107px;top:321.64px;font-size:12px;color:#333;font-weight:400;font-family:'Liberation Sans',sans-serif;">...</div>
<div class="t" style="left:132px;top:321.64px;font-size:12px;color:#333;font-weight:400;font-family:'Liberation Sans',sans-serif;">Asiento</div>
<div class="t" style="left:202px;top:321.64px;font-size:12px;color:#333;font-weight:400;font-family:'Liberation Sans',sans-serif;">Apunte</div>
<div class="t" style="left:252px;top:321.64px;font-size:12px;color:#333;font-weight:400;font-family:'Liberation Sans',sans-serif;">Fecha</div>
<div class="t" style="left:347px;top:321.64px;font-size:12px;color:#333;font-weight:400;font-family:'Liberation Sans',sans-serif;">Cuenta</div>
<div class="t" style="left:497px;top:321.64px;font-size:12px;color:#333;font-weight:400;font-family:'Liberation Sans',sans-serif;">Nom.Cuenta</div>
<div class="t" style="left:912px;top:321.64px;font-size:12px;color:#333;font-weight:400;font-family:'Liberation Sans',sans-serif;">Clave</div>
<div class="t" style="left:962px;top:321.64px;font-size:12px;color:#333;font-weight:400;font-family:'Liberation Sans',sans-serif;">Documento</div>
<div class="t" style="left:1062px;top:321.64px;font-size:12px;color:#333;font-weight:400;font-family:'Liberation Sans',sans-serif;">Concepto</div>
<div class="t" style="left:1578px;top:321.64px;font-size:12px;color:#333;font-weight:400;font-family:'Liberation Sans',sans-serif;letter-spacing:0.15px">Debe (M.O.)</div>
<div class="t" style="left:1678px;top:321.64px;font-size:12px;color:#333;font-weight:400;font-family:'Liberation Sans',sans-serif;letter-spacing:0.15px">Haber (M.O)</div>
<div class="t" style="left:1778px;top:321.64px;font-size:12px;color:#333;font-weight:400;font-family:'Liberation Sans',sans-serif;">...</div>
<div class="t" style="left:1800px;top:321.64px;font-size:12px;color:#333;font-weight:400;font-family:'Liberation Sans',sans-serif;">...</div>
<div class="t" style="left:1822px;top:321.64px;font-size:12px;color:#333;font-weight:400;font-family:'Liberation Sans',sans-serif;">i...</div>
<div class="a" style="left:129px;top:658px;width:68px;height:30px;background:#f5f5f5;border:1px solid #c4c4c4;box-sizing:border-box;"></div>
<div class="t" style="left:-406.5px;width:600px;text-align:right;top:664.49px;font-size:17.5px;color:#333;font-weight:700;font-family:'Liberation Serif',sans-serif;transform:scaleX(1.15);transform-origin:right center">0</div>
<div class="a" style="left:1575px;top:658px;width:98px;height:30px;background:#f5f5f5;border:1px solid #c4c4c4;box-sizing:border-box;"></div>
<div class="t" style="left:1069.5px;width:600px;text-align:right;top:664.49px;font-size:17.5px;color:#333;font-weight:700;font-family:'Liberation Serif',sans-serif;letter-spacing:0.4px;transform:scaleX(1.1);transform-origin:right center">0,00</div>
<div class="a" style="left:1675px;top:658px;width:98px;height:30px;background:#f5f5f5;border:1px solid #c4c4c4;box-sizing:border-box;"></div>
<div class="t" style="left:1169.5px;width:600px;text-align:right;top:664.49px;font-size:17.5px;color:#333;font-weight:700;font-family:'Liberation Serif',sans-serif;letter-spacing:0.4px;transform:scaleX(1.1);transform-origin:right center">0,00</div>
<div class="a" style="left:54px;top:707px;width:1657px;height:186px;background:transparent;border:1px solid #c8c8c8;box-sizing:border-box;"></div>
<div class="a" style="left:62px;top:702px;width:43px;height:10px;background:#f5f5f5;"></div>
<div class="t" style="left:66px;top:700.19px;font-size:11px;color:#800000;font-weight:400;font-family:'Liberation Sans',sans-serif;">Apunte</div>
<div class="a" style="left:1711px;top:707px;width:138px;height:186px;background:transparent;border:1px solid #c8c8c8;box-sizing:border-box;"></div>
<div class="a" style="left:1718px;top:702px;width:113px;height:10px;background:#f5f5f5;"></div>
<div class="t" style="left:1723px;top:700.49px;font-size:11px;color:#800000;font-weight:400;font-family:'Liberation Sans',sans-serif;">Totales asiento M.O.:</div>
<div class="t" style="left:69px;top:721.60px;font-size:12.4px;color:#333;font-weight:400;font-family:'Liberation Sans',sans-serif;">Cuenta contable:</div>
<svg class="a" style="left:235px;top:720px;" width="15" height="13" viewBox="0 0 15 13"><path d="M2.5 1.5 L2.5 6 Q2.5 8 4.5 8 L8 8" stroke="#2a6ad8" stroke-width="1.6" fill="none"/><path d="M6.5 5 L9.5 8 L6.5 11Z" fill="#2a6ad8"/><rect x="10.5" y="2" width="2.2" height="6" fill="#333"/><rect x="10.5" y="9.3" width="2.2" height="2" fill="#333"/></svg>
<div class="a" style="left:66px;top:737px;width:258px;height:26px;background:#fff;border:1px solid #646464;box-sizing:border-box;"></div>
<div class="t" style="left:70px;top:743.26px;font-size:16px;color:#333;font-weight:400;font-family:'Liberation Sans',sans-serif;letter-spacing:-0.1px">4 0 0 00 0 000017</div>
<div class="t" style="left:62px;top:773.76px;font-size:13.4px;color:#333;font-weight:400;font-family:'Liberation Sans',sans-serif;">Clave:</div>
<div class="a" style="left:144px;top:766px;width:65px;height:26px;background:#ffff00;border:1px solid #646464;box-sizing:border-box;"></div>
<div class="t" style="left:-393.5px;width:600px;text-align:right;top:770.76px;font-size:16px;color:#000;font-weight:700;font-family:'Liberation Sans',sans-serif;font-style:italic">7</div>
<div class="t" style="left:62px;top:800.85px;font-size:14px;color:#333;font-weight:400;font-family:'Liberation Sans',sans-serif;">Documento:</div>
<div class="a" style="left:144px;top:794px;width:186px;height:26px;background:#fff;border:1px solid #646464;box-sizing:border-box;"></div>
<div class="t" style="left:146px;top:799.66px;font-size:16px;color:#000;font-weight:400;font-family:'Liberation Sans',sans-serif;">2</div>
<div class="t" style="left:62px;top:829.05px;font-size:14px;color:#333;font-weight:400;font-family:'Liberation Sans',sans-serif;">Concepto:</div>
<div class="a" style="left:144px;top:822px;width:633px;height:26px;background:#ffe4c4;border:1px solid #646464;box-sizing:border-box;"></div>
<div class="t" style="left:147px;top:827.06px;font-size:16px;color:#000;font-weight:400;font-family:'Liberation Sans',sans-serif;">Nuestra entrega 2</div>
<div class="t" style="left:62px;top:857.19px;font-size:13.6px;color:#333;font-weight:400;font-family:'Liberation Sans',sans-serif;">Importe:</div>
<div class="a" style="left:144px;top:850px;width:186px;height:26px;background:#ffff00;border:1px solid #646464;box-sizing:border-box;"></div>
<div class="t" style="left:-272px;width:600px;text-align:right;top:855.46px;font-size:16px;color:#000;font-weight:400;font-family:'Liberation Sans',sans-serif;">287,84</div>
<div class="a" style="left:349px;top:736px;width:332px;height:26px;background:#fff;border:1px solid #646464;box-sizing:border-box;"></div>
<div class="t" style="left:354px;top:742.76px;font-size:16px;color:#0000cc;font-weight:400;font-family:'Liberation Sans',sans-serif;">LINO DOMINGUEZ, GEMA</div>
<div class="a" style="left:349px;top:766px;width:83px;height:26px;background:#90ee90;border:1px solid #646464;box-sizing:border-box;"></div>
<div class="t" style="left:90.5px;width:600px;text-align:center;top:773.76px;font-size:16px;color:#000080;font-weight:400;font-family:'Liberation Sans',sans-serif;transform:scaleX(0.87)">DEBE</div>
<div class="a" style="left:439px;top:766px;width:167px;height:26px;background:#fff;border:1px solid #646464;box-sizing:border-box;"></div>
<div class="t" style="left:443px;top:774.53px;font-size:10.6px;color:#0000cc;font-weight:400;font-family:'Liberation Sans',sans-serif;">Nuestra entrega</div>
<svg class="a" style="left:644px;top:767px;" width="19" height="17" viewBox="0 0 19 17"><g fill="none" stroke="#2a7a2a" stroke-width="1.5"><path d="M5 8 Q6 4 10 3"/><path d="M14 6 L15.5 12"/><path d="M12.5 14.5 L6 14"/></g><g fill="#3aa03a"><path d="M9 0.5 L13 3 L9 5.5Z"/><path d="M13 11.5 L17.5 10.5 L16 15.5Z"/><path d="M7 11 L3 13.8 L7.5 16.5Z"/><path d="M2 8 L4 5 L7 8.5Z"/></g></svg>
<div class="a" style="left:347px;top:796px;width:87px;height:22px;background:linear-gradient(#f0f0f0,#e2e2e2);border:1px solid #b4b4b4;box-sizing:border-box;"></div>
<div class="t" style="left:90.5px;width:600px;text-align:center;top:801.60px;font-size:11.7px;color:#333;font-weight:400;font-family:'Liberation Sans',sans-serif;">Observaciones</div>
<div class="a" style="left:499px;top:806px;width:29px;height:12px;background:#f0f0f0;border:1px solid #111;box-sizing:border-box;"></div>
<div class="a" style="left:532px;top:806px;width:29px;height:12px;background:linear-gradient(#f0f0f0,#e2e2e2);border:1px solid #c0c0c0;box-sizing:border-box;"></div>
<div class="a" style="left:565px;top:806px;width:29px;height:12px;background:linear-gradient(#f0f0f0,#e2e2e2);border:1px solid #c0c0c0;box-sizing:border-box;"></div>
<div class="t" style="left:708px;top:720.60px;font-size:11.7px;color:#333;font-weight:400;font-family:'Liberation Sans',sans-serif;">Asiento:</div>
<div class="a" style="left:705px;top:735px;width:71px;height:26px;background:#e0ffff;border:1px solid #646464;box-sizing:border-box;"></div>
<div class="t" style="left:173px;width:600px;text-align:right;top:740.46px;font-size:16px;color:#000;font-weight:400;font-family:'Liberation Sans',sans-serif;">276.283</div>
<div class="t" style="left:708px;top:764.10px;font-size:11.7px;color:#333;font-weight:400;font-family:'Liberation Sans',sans-serif;">Apunte:</div>
<div class="a" style="left:705px;top:778px;width:71px;height:26px;background:#e0ffff;border:1px solid #646464;box-sizing:border-box;"></div>
<div class="t" style="left:173px;width:600px;text-align:right;top:784.46px;font-size:16px;color:#000;font-weight:400;font-family:'Liberation Sans',sans-serif;">1</div>
<svg class="a" style="left:795px;top:737px;" width="27" height="27" viewBox="0 0 27 27"><path d="M3 2 L11 2 L15 6 L15 19 Q15 21 13 21 L3 21 Q1 21 1 19 L1 4 Q1 2 3 2Z" fill="#f5f5f5" stroke="#008000" stroke-width="2"/><path d="M12 7 L19 7 L24 12 L24 24 Q24 26 22 26 L12 26 Q10 26 10 24 L10 9 Q10 7 12 7Z" fill="#f5f5f5" stroke="#008000" stroke-width="2"/><path d="M4 8 L8 8 M4 11 L8 11 M4 14 L8 14 M13 15 L21 15 M13 18 L21 18 M13 21 L21 21" stroke="#008000" stroke-width="1.4"/><path d="M18 7 L18 12 L24 12" fill="none" stroke="#008000" stroke-width="1.5"/></svg>
<svg class="a" style="left:795px;top:772px;" width="27" height="27" viewBox="0 0 27 27"><path d="M3 2 L11 2 L15 6 L15 19 Q15 21 13 21 L3 21 Q1 21 1 19 L1 4 Q1 2 3 2Z" fill="#f5f5f5" stroke="#8b008b" stroke-width="2"/><path d="M12 7 L19 7 L24 12 L24 24 Q24 26 22 26 L12 26 Q10 26 10 24 L10 9 Q10 7 12 7Z" fill="#f5f5f5" stroke="#8b008b" stroke-width="2"/><path d="M4 8 L8 8 M4 11 L8 11 M4 14 L8 14 M13 15 L21 15 M13 18 L21 18 M13 21 L21 21" stroke="#8b008b" stroke-width="1.4"/><path d="M18 7 L18 12 L24 12" fill="none" stroke="#8b008b" stroke-width="1.5"/></svg>
<div class="a" style="left:352px;top:850px;width:24px;height:12px;background:linear-gradient(#f0f0f0,#e0e0e0);border:1px solid #c0c0c0;box-sizing:border-box;"></div>
<svg class="a" style="left:389px;top:855px;" width="28" height="29" viewBox="0 0 28 29"><path d="M14 2.5 C20.5 2.5 25.5 7 25.5 13 C25.5 19 20.5 23.5 14 23.5 C12.3 23.5 10.8 23.2 9.5 22.7 L3.5 26.5 L5.5 20.5 C3.5 18.5 2.5 16 2.5 13 C2.5 7 7.5 2.5 14 2.5Z" fill="none" stroke="#a8a8a8" stroke-width="2"/><rect x="10" y="13" width="8" height="6.5" rx="0.8" fill="#a8a8a8"/><path d="M11.8 13 L11.8 11.3 Q11.8 9 14 9 Q16.2 9 16.2 11.3 L16.2 13" fill="none" stroke="#a8a8a8" stroke-width="1.5"/><rect x="13.2" y="15" width="1.6" height="2.5" fill="#f5f5f5"/></svg>
<svg class="a" style="left:430px;top:856px;" width="28" height="28" viewBox="0 0 28 28"><circle cx="14" cy="14" r="11.2" fill="none" stroke="#a8a8a8" stroke-width="2.2" stroke-dasharray="14.6 3" stroke-dashoffset="-1.5"/><path d="M14 8 L14 20 M8 14 L20 14" stroke="#a8a8a8" stroke-width="2.2"/></svg>
<svg class="a" style="left:472px;top:855px;" width="24" height="30" viewBox="0 0 24 30"><circle cx="17.5" cy="3.5" r="2.4" fill="#a8a8a8"/><path d="M15 7 L20 7 Q21.5 7 21.5 9 L21.5 17 L20 17 L20 27.5 L18.5 27.5 L17.8 19 L17 27.5 L15.5 27.5 L15.5 17 L15 12 L11 14.5 L10 13 Z" fill="#a8a8a8"/><path d="M2.5 17.5 L9 17.5 L8 27.5 L3.5 27.5Z" fill="none" stroke="#a8a8a8" stroke-width="1.3"/><path d="M5 15 L6 13 M7.5 14 L8.5 12.5" stroke="#a8a8a8" stroke-width="1"/></svg>
<svg class="a" style="left:511px;top:859px;" width="28" height="22" viewBox="0 0 28 22"><path d="M1.5 9.5 Q1.5 7 4.5 6.5 L14.5 6.5 L14.5 2 L25.5 10.5 L14.5 19 L14.5 14.5 L8 14.5 Q3 14.5 1.5 17 Z" fill="#a8a8a8"/></svg>
<svg class="a" style="left:555px;top:856px;" width="24" height="28" viewBox="0 0 24 28"><path d="M3 6 L21 6" stroke="#a8a8a8" stroke-width="2.2"/><path d="M8.5 6 L8.5 3.5 Q8.5 2 10 2 L14 2 Q15.5 2 15.5 3.5 L15.5 6" fill="none" stroke="#a8a8a8" stroke-width="1.8"/><path d="M5 8 L6 25 Q6 26.5 7.5 26.5 L16.5 26.5 Q18 26.5 18 25 L19 8" fill="none" stroke="#a8a8a8" stroke-width="2"/><path d="M9 11 L9 23 M12 11 L12 23 M15 11 L15 23" stroke="#a8a8a8" stroke-width="1.6"/></svg>
<svg class="a" style="left:594px;top:858px;" width="28" height="24" viewBox="0 0 28 24"><path d="M2 12 L8.5 20 L24 3" stroke="#e0440e" stroke-width="3.4" fill="none"/></svg>
<svg class="a" style="left:636px;top:857px;" width="26" height="26" viewBox="0 0 26 26"><path d="M7.5 3 L3 3 L3 23 L23 23 L23 19" fill="none" stroke="#e0440e" stroke-width="4" stroke-linejoin="round"/><path d="M6 0.8 L10 5 L6 5Z" fill="#e0440e"/><path d="M20.5 17 L25 21 L20.5 21Z" fill="#e0440e"/><path d="M12 16.5 L21 7.5" stroke="#e0440e" stroke-width="4" stroke-linecap="round"/><path d="M13.5 3 L23 3 L23 12.5" fill="none" stroke="#e0440e" stroke-width="4" stroke-linecap="round" stroke-linejoin="round"/></svg>
<div class="a" style="left:670px;top:855px;width:1px;height:31px;background:#333;"></div>
<svg class="a" style="left:678px;top:857px;" width="28" height="26" viewBox="0 0 28 26"><path d="M9 2.2 L16 4.5 Q17.5 5 18.5 6.5 L25.5 16.5 Q26.5 18.5 24.5 19.5 L13 24.5 Q11.5 25.2 10 24 L2.5 18 Q1 16.5 3 15.5 L14 11.5 Z" fill="#800080"/><path d="M5 16.5 L11.5 14.2 L16 18 L10 20.8Z" fill="#fff"/><path d="M12.8 13.8 L17.5 12.2 L21.5 15.5 L17 17.5Z" fill="#fff"/><path d="M14 11.5 L24 16" stroke="#800080" stroke-width="1"/></svg>
<div class="a" style="left:848px;top:736px;width:167px;height:143px;background:transparent;border:1px solid #c8c8c8;box-sizing:border-box;"></div>
<div class="a" style="left:855px;top:731px;width:78px;height:10px;background:#f5f5f5;"></div>
<div class="t" style="left:859px;top:729.43px;font-size:10.6px;color:#800000;font-weight:400;font-family:'Liberation Sans',sans-serif;">Saldo contable</div>
<div class="t" style="left:856px;top:754.54px;font-size:12px;color:#333;font-weight:400;font-family:'Liberation Sans',sans-serif;">Saldo a fecha día:</div>
<div class="a" style="left:853px;top:768px;width:149px;height:24px;background:#fff;border:1px solid #646464;box-sizing:border-box;"></div>
<div class="t" style="left:396px;width:600px;text-align:right;top:774.26px;font-size:16px;color:#333;font-weight:400;font-family:'Liberation Sans',sans-serif;letter-spacing:0.15px">-6.954,05</div>
<div class="t" style="left:856px;top:803.44px;font-size:12px;color:#333;font-weight:400;font-family:'Liberation Sans',sans-serif;">Saldo a fecha asiento:</div>
<div class="a" style="left:853px;top:817px;width:149px;height:24px;background:#fff;border:1px solid #646464;box-sizing:border-box;"></div>
<div class="t" style="left:396px;width:600px;text-align:right;top:823.26px;font-size:16px;color:#333;font-weight:400;font-family:'Liberation Sans',sans-serif;letter-spacing:0.15px">-6.954,05</div>
<svg class="a" style="left:852px;top:854px;" width="20" height="18" viewBox="0 0 20 18"><g fill="#e0440e"><rect x="1.5" y="2" width="2.5" height="2.5"/><rect x="1.5" y="6.5" width="4.5" height="2.5"/><rect x="1.5" y="11" width="7" height="2.5"/><rect x="1.5" y="14.5" width="9.5" height="2.5"/><rect x="14" y="5" width="2" height="8"/><path d="M11.5 11 L18.5 11 L15 16Z"/></g></svg>
<svg class="a" style="left:876px;top:854px;" width="15" height="18" viewBox="0 0 15 18"><rect x="1.5" y="2" width="11" height="15" fill="none" stroke="#0000ff" stroke-width="1.5"/><rect x="3.5" y="1" width="7" height="2.5" rx="1" fill="#0000ff"/><path d="M4 6 L9 6 M4 8.5 L10.5 8.5 M4 11 L9 11 M4 13.5 L10.5 13.5" stroke="#0000ff" stroke-width="1"/></svg>
<svg class="a" style="left:1096px;top:763px;" width="36" height="34" viewBox="0 0 36 34"><rect x="2.5" y="2" width="30" height="30" rx="5" fill="none" stroke="#008000" stroke-width="3.3"/><path d="M7.5 17.5 L14.5 25 L27 8.5" stroke="#008000" stroke-width="4.6" fill="none"/></svg>
<div class="t" style="left:1720px;top:722.83px;font-size:12.6px;color:#333;font-weight:400;font-family:'Liberation Sans',sans-serif;">Total Debe:</div>
<div class="a" style="left:1719px;top:737px;width:121px;height:24px;background:#fff;border:1px solid #646464;box-sizing:border-box;"></div>
<div class="t" style="left:1720px;top:763.73px;font-size:12.6px;color:#333;font-weight:400;font-family:'Liberation Sans',sans-serif;">Total Haber:</div>
<div class="a" style="left:1719px;top:778px;width:121px;height:24px;background:#fff;border:1px solid #646464;box-sizing:border-box;"></div>
<div class="t" style="left:1719px;top:805.93px;font-size:12.6px;color:#333;font-weight:400;font-family:'Liberation Sans',sans-serif;">Diferencia:</div>
<div class="a" style="left:1719px;top:819px;width:121px;height:24px;background:#fff;border:1px solid #646464;box-sizing:border-box;"></div>
<div class="a" style="left:1816px;top:846px;width:24px;height:12px;background:linear-gradient(#f0f0f0,#e0e0e0);border:1px solid #c0c0c0;box-sizing:border-box;"></div>
<div class="t" style="left:57px;top:911.53px;font-size:10.6px;color:#333;font-weight:400;font-family:'Liberation Sans',sans-serif;">Normas contables</div>
<div class="a" style="left:55px;top:928px;width:92px;height:4px;background:#c4c4c4;"></div>
</body></html>
